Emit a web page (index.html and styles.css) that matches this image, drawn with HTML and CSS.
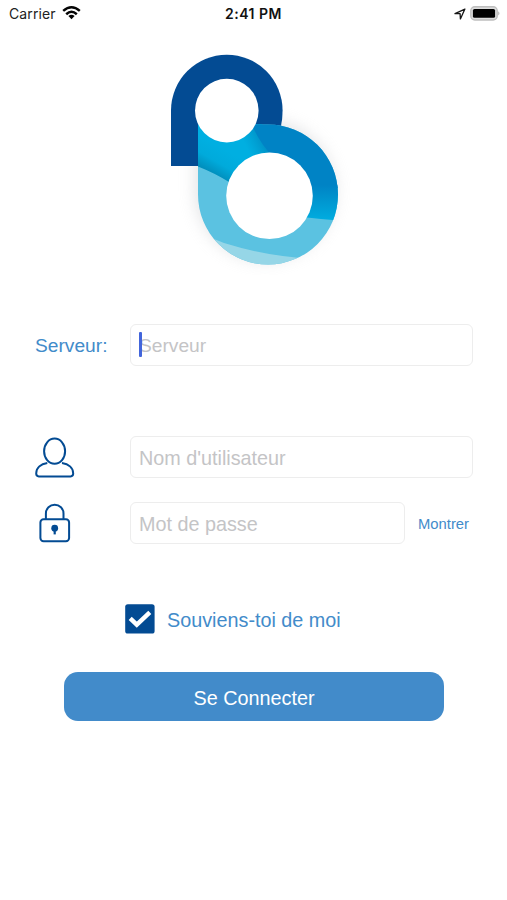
FILE: index.html
```html
<!DOCTYPE html>
<html lang="fr">
<head>
<meta charset="utf-8">
<meta name="viewport" content="width=device-width, initial-scale=1">
<title>Se Connecter</title>
<link rel="stylesheet" href="styles.css">
</head>
<body>
<header class="status">
  <div class="carrier"><span>Carrier</span>
    <svg width="19" height="14" viewBox="0 0 19 14"><g fill="none" stroke="#050505" stroke-width="2.5"><path d="M1.2 4.9Q9.5-2.3 17.8 4.9"/><path d="M4.2 8.2Q9.5 3.4 14.8 8.2"/></g><path d="M6.4 10.1Q9.5 7.5 12.6 10.1L9.5 13.3Z" fill="#050505"/></svg>
  </div>
  <div class="time">2:41 PM</div>
  <div class="indicators">
    <svg width="12" height="12" viewBox="0 0 12 12"><path d="M10.9 1.1L1 5.7H6.1L6.4 10.9Z" fill="none" stroke="#151515" stroke-width="1.3" stroke-linejoin="round"/></svg>
    <svg width="31" height="15" viewBox="0 0 31 15"><rect x=".8" y=".8" width="26.4" height="13.2" rx="4" fill="#ddd" stroke="#bebebe" stroke-width="1.4"/><rect x="2.9" y="3" width="22.2" height="8.8" rx="1.6" fill="#000"/><path d="M28.3 5.2Q30.5 7.4 28.3 9.6Z" fill="#aaa"/></svg>
  </div>
</header>
<main>
  <svg class="logo" width="200" height="230" viewBox="155 45 200 230" role="img" aria-label="Logo">
    <defs>
      <clipPath id="drop"><path d="M198 124.5H267.7A70 70 0 1 1 198 194.5Z"/></clipPath>
      <linearGradient id="teal" x1="0" y1="0" x2="0" y2="1"><stop offset="0" stop-color="#0083c5"/><stop offset=".35" stop-color="#0092cd"/><stop offset="1" stop-color="#00ade0"/></linearGradient>
      <linearGradient id="cyan" gradientUnits="userSpaceOnUse" x1="227" y1="151" x2="214" y2="174"><stop offset="0" stop-color="#00afe1"/><stop offset=".55" stop-color="#00aadb"/><stop offset="1" stop-color="#008fbd"/></linearGradient>
      <linearGradient id="edge" gradientUnits="userSpaceOnUse" x1="246" y1="147" x2="262" y2="139"><stop offset="0" stop-color="#009bcf" stop-opacity="0"/><stop offset="1" stop-color="#0092c7"/></linearGradient>
      <filter id="soft" x="-30%" y="-30%" width="160%" height="160%"><feGaussianBlur stdDeviation="8"/></filter>
    </defs>
    <path d="M198 124.5H267.7A70 70 0 1 1 198 194.5Z" transform="translate(-3 -4)" fill="#b9bcc0" opacity=".4" filter="url(#soft)"/>
    <path d="M171 166V110.5A55.8 55.8 0 0 1 282.6 110.5Q282.6 119 280.8 127L198 166Z" fill="#034b93"/>
    <g clip-path="url(#drop)">
      <rect x="197" y="124" width="142" height="142" fill="#5bc2e1"/>
      <path d="M197 124H262L275 172L229 182Q215 173 197 166Z" fill="url(#cyan)"/>
      <path d="M240 124H262L275 160H240Z" fill="url(#edge)"/>
      <path d="M250 120Q258 142 275 159L308 188H340V120Z" fill="#0083c5"/>
      <path d="M302 185H340V220.5Q323 219.5 302 217Z" fill="url(#teal)"/>
      <path d="M197 233Q212 238 224 243Q259 254 298 257.8V270H197Z" fill="#96d6e7"/>
    </g>
    <circle cx="226.8" cy="110.6" r="31.8" fill="#fff"/>
    <circle cx="269.5" cy="195.8" r="43.3" fill="#fff"/>
  </svg>
  <form class="login">
    <div class="row server">
      <label class="label">Serveur:</label>
      <div class="field focused">Serveur</div>
    </div>
    <div class="row user">
      <svg class="icon" width="40" height="42" viewBox="0 -1 40 42" fill="none" stroke="#034b93" stroke-width="2"><ellipse cx="19.6" cy="14.2" rx="10.5" ry="12.6"/><path d="M12.3 26.1C5.8 27.1 1.2 30.8 1.2 36.6Q1.2 39.4 3.8 39.4H35.6Q38.2 39.4 38.2 36.6C38.2 30.8 33.5 27.1 27 26.1"/></svg>
      <div class="field">Nom d'utilisateur</div>
    </div>
    <div class="row password">
      <svg class="icon" width="40" height="42" viewBox="0 0 40 42" fill="none" stroke="#034b93" stroke-width="2"><rect x="5.4" y="17.2" width="28.7" height="22" rx="3.2"/><path d="M10.9 17V11.5A8.8 8.8 0 0 1 28.5 11.5V17"/><circle cx="19.7" cy="26.2" r="3.4" fill="#034b93" stroke="none"/><path d="M19.7 27V32.4" stroke-width="2.2"/></svg>
      <div class="field">Mot de passe</div>
      <span class="show">Montrer</span>
    </div>
    <div class="remember">
      <svg width="30" height="30" viewBox="0 0 30 30"><rect x=".2" y=".2" width="29.4" height="29.4" rx="2.6" fill="#034b93"/><path d="M5.2 14.3L11.8 20.6L24.8 8.4" fill="none" stroke="#fff" stroke-width="4.4"/></svg>
      <span>Souviens-toi de moi</span>
    </div>
    <button class="submit" type="button">Se Connecter</button>
  </form>
</main>
</body>
</html>
```
FILE: styles.css
```css
* { box-sizing: border-box; }
body {
  margin: 0;
  min-height: 900px;
  background: #fff;
  color: #428bca;
  font: 19.8px/24px "Liberation Sans", Arial, sans-serif;
}
svg { display: block; flex: none; }
.status {
  display: grid;
  grid-template-columns: 1fr auto 1fr;
  align-items: center;
  height: 27px;
  padding: 0 6px 0 9px;
  color: #222;
  font: 14px/20px Inter, sans-serif;
  letter-spacing: 0.1px;
}
.carrier { display: flex; align-items: center; gap: 6px; }
.carrier svg { margin-top: -2px; }
.time { margin-right: 3px; color: #111; font-weight: 600; letter-spacing: 0.5px; }
.indicators { display: flex; align-items: center; justify-content: flex-end; gap: 4px; }
.logo { margin: 18px 0 0 155px; }
.login { padding: 49px 34px 0 35px; }
.row { display: flex; align-items: center; height: 42px; }
.label { width: 95px; padding-top: 2px; font-size: 19.2px; }
.icon { margin-right: 55px; }
.field {
  display: flex;
  align-items: center;
  flex: 1;
  height: 42px;
  padding: 1px 8px 0;
  border: 1px solid #ededed;
  border-radius: 6px;
  color: #c4c4c6;
}
.focused { padding-top: 2px; font-size: 19.2px; }
.focused::before {
  content: "";
  z-index: 1;
  width: 3px;
  height: 25px;
  margin: -3px -3px 0 0;
  border-radius: 1px;
  background: #4265db;
}
.user { margin-top: 70px; }
.password { margin-top: 24px; }
.show { width: 55px; margin-left: 13px; padding-top: 1px; font-size: 14.8px; }
.remember {
  display: flex;
  align-items: center;
  gap: 12px;
  margin: 60px 0 0 90px;
}
.remember span { padding-top: 1px; }
.submit {
  display: block;
  width: 380px;
  height: 49px;
  margin: 38px 0 0 29px;
  padding: 3px 0 0;
  border: 0;
  border-radius: 14px;
  background: #428bca;
  color: #fff;
  font: inherit;
}
```
